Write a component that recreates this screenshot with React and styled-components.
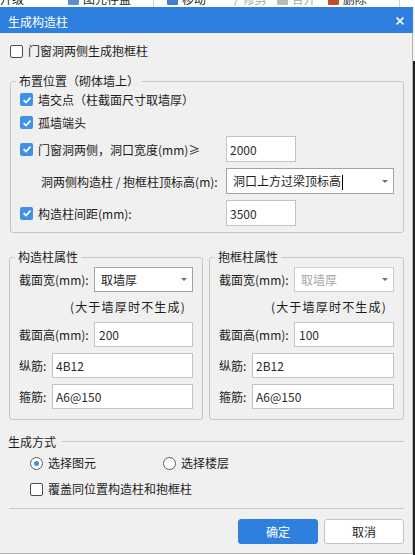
import React from 'react';
import styled, { createGlobalStyle } from 'styled-components';

const GlobalStyle = createGlobalStyle`
  html, body {
    margin: 0;
    padding: 0;
    background: #ffffff;
  }
  body {
    font-family: "Noto Sans CJK SC", "Microsoft YaHei", "Noto Sans", sans-serif;
    font-size: 12px;
    color: #1c1c1c;
  }
  * {
    box-sizing: border-box;
  }
`;

const BLUE = '#2f80de';

const Page = styled.div`
  width: 415px;
  height: 555px;
  overflow: hidden;
  display: flex;
  flex-direction: column;
  background: #ffffff;
`;

const BehindBar = styled.div`
  height: 7px;
  flex: none;
  display: flex;
  align-items: flex-end;
  overflow: hidden;
  background: #ffffff;
`;

const ToolItem = styled.span`
  flex: none;
  display: inline-flex;
  align-items: center;
  gap: 4px;
  height: 16px;
  line-height: 16px;
  margin-left: ${(p) => p.$gap || 0}px;
  color: ${(p) => (p.$muted ? '#a8a8a8' : '#1c1c1c')};
  white-space: nowrap;
`;

const ToolDivider = styled.span`
  flex: none;
  width: 1px;
  height: 16px;
  background: #cfcfcf;
  margin-left: ${(p) => p.$gap || 0}px;
`;

const ToolIcon = styled.span`
  width: 11px;
  height: 12px;
  background: ${(p) => p.$color};
  border-radius: 1px;
`;

const Main = styled.div`
  flex: 1;
  display: flex;
`;

const Side = styled.div`
  flex: 1;
  background: linear-gradient(#f4f4f4 0, #f4f4f4 54px, #1e1e1e 54px);
`;

const Dialog = styled.div`
  width: 413px;
  height: 547px;
  flex: none;
  display: flex;
  flex-direction: column;
  background: #f0f0f0;
  border-right: 1px solid #b4b4b4;
  border-bottom: 1px solid #a9bcd6;
`;

const TitleBar = styled.div`
  height: 26px;
  flex: none;
  display: flex;
  align-items: center;
  justify-content: space-between;
  padding: 2px 9px 0 8px;
  margin-right: -1px;
  background: ${BLUE};
  color: #ffffff;
  font-size: 12px;
`;

const Body = styled.div`
  flex: 1;
  display: flex;
  flex-direction: column;
  padding: 0 8px 0 9px;
`;

const Line = styled.div`
  display: flex;
  align-items: center;
  height: ${(p) => p.$h || 16}px;
  margin-top: ${(p) => p.$mt || 0}px;
  padding-left: ${(p) => p.$pl || 0}px;
  line-height: 16px;
  white-space: nowrap;
`;

const Box = styled.span`
  flex: none;
  width: 13px;
  height: 13px;
  margin-right: 5px;
  border-radius: 2px;
  display: inline-flex;
  align-items: center;
  justify-content: center;
  background: ${(p) => (p.$checked ? '#3f90e8' : '#ffffff')};
  border: ${(p) => (p.$checked ? 'none' : '1px solid #4d4d4d')};
`;

const Round = styled.span`
  flex: none;
  width: 13px;
  height: 13px;
  margin-right: 5px;
  border-radius: 50%;
  border: 1px solid #5a5a5a;
  background: #ffffff;
  display: inline-flex;
  align-items: center;
  justify-content: center;

  &::after {
    content: '';
    width: 5px;
    height: 5px;
    border-radius: 50%;
    background: ${(p) => (p.$checked ? '#3f90e8' : 'transparent')};
  }
`;

const RadioItem = styled.span`
  display: inline-flex;
  align-items: center;
  width: ${(p) => p.$w || 'auto'};
`;

const Group = styled.fieldset`
  margin: ${(p) => p.$mt || 0}px 0 0 ${(p) => p.$ml || 0}px;
  padding: ${(p) => p.$pt || 0}px 9px ${(p) => p.$pb || 0}px 9px;
  min-width: 0;
  flex: ${(p) => p.$flex || 'none'};
  border: 1px solid #c6c6c6;
  border-radius: 3px;
  display: flex;
  flex-direction: column;

  legend {
    padding: 0 3px;
    margin-left: -4px;
    line-height: 14px;
    font-size: 12px;
  }
`;

const GroupRow = styled.div`
  display: flex;
  gap: 6px;
  margin-top: 17px;
`;

const FieldRow = styled.div`
  display: flex;
  align-items: center;
  height: ${(p) => p.$h || 25}px;
  margin-top: ${(p) => p.$mt || 0}px;
  white-space: nowrap;
`;

const Label = styled.span`
  flex: none;
  display: inline-flex;
  align-items: center;
  width: ${(p) => p.$w}px;
  padding-left: ${(p) => p.$pl || 0}px;
`;

const TextInput = styled.input`
  height: 100%;
  width: ${(p) => (p.$w ? `${p.$w}px` : 'auto')};
  flex: ${(p) => (p.$w ? 'none' : 1)};
  min-width: 0;
  margin: 0;
  padding: 0 ${(p) => p.$pad || 3}px;
  border: 1px solid #c3c3c3;
  border-radius: 0;
  background: #ffffff;
  font: inherit;
  color: #2a2a2a;
  outline: none;
`;

const Select = styled.div`
  flex: 1;
  height: 100%;
  display: flex;
  align-items: center;
  justify-content: space-between;
  padding: 0 5px 0 6px;
  background: #ffffff;
  border: 1px solid ${(p) => (p.$disabled ? '#cdcdcd' : '#a3a3a3')};
  color: ${(p) => (p.$disabled ? '#a6a6a6' : '#1c1c1c')};
`;

const Caret = styled.span`
  width: 0;
  height: 0;
  border-left: 3px solid transparent;
  border-right: 3px solid transparent;
  border-top: 3px solid #6e6e6e;
`;

const TextCursor = styled.span`
  display: inline-block;
  width: 1px;
  height: 15px;
  margin-left: 1px;
  vertical-align: middle;
  background: #000000;
`;

const Note = styled.div`
  height: 18px;
  margin-top: 6px;
  padding-right: 7px;
  text-align: right;
  line-height: 18px;
  letter-spacing: 1.2px;
  white-space: nowrap;
`;

const SectionHead = styled.div`
  display: flex;
  align-items: center;
  height: 16px;
  margin-top: 13px;
  margin-left: -1px;

  &::after {
    content: '';
    flex: 1;
    height: 1px;
    margin-left: 6px;
    background: #c8c8c8;
  }
`;

const Separator = styled.div`
  height: 1px;
  margin-top: 11px;
  background: #c8c8c8;
`;

const Buttons = styled.div`
  display: flex;
  justify-content: flex-end;
  gap: 6px;
  margin-top: 10px;
`;

const Button = styled.button`
  width: 80px;
  height: 25px;
  margin: 0;
  padding: 0;
  border-radius: 3px;
  font: inherit;
  cursor: pointer;
  background: ${(p) => (p.$primary ? BLUE : '#ffffff')};
  color: ${(p) => (p.$primary ? '#ffffff' : '#1c1c1c')};
  border: 1px solid ${(p) => (p.$primary ? BLUE : '#c4c4c4')};
`;

const Check = ({ checked }) => (
  <Box $checked={checked}>
    {checked && (
      <svg width="10" height="10" viewBox="0 0 10 10">
        <path d="M1.6 5.2 L4 7.5 L8.5 2.6" fill="none" stroke="#ffffff" strokeWidth="1.7" />
      </svg>
    )}
  </Box>
);

const CloseIcon = () => (
  <svg width="8" height="8" viewBox="0 0 8 8">
    <path d="M0.6 0.6 L7.4 7.4 M7.4 0.6 L0.6 7.4" stroke="#ffffff" strokeWidth="1.6" />
  </svg>
);

const PropGroup = ({ title, width, disabled, height, bars, stirrup, flex, ml }) => (
  <Group $pt={3} $pb={10} $flex={flex} $ml={ml}>
    <legend>{title}</legend>
    <FieldRow>
      <Label $w={75}>截面宽(mm):</Label>
      <Select $disabled={disabled}>
        <span>{width}</span>
        <Caret />
      </Select>
    </FieldRow>
    <Note>(大于墙厚时不生成)</Note>
    <FieldRow $mt={6}>
      <Label $w={75}>截面高(mm):</Label>
      <TextInput defaultValue={height} $pad={4} />
    </FieldRow>
    <FieldRow $mt={6}>
      <Label $w={33}>纵筋:</Label>
      <TextInput defaultValue={bars} />
    </FieldRow>
    <FieldRow $mt={6}>
      <Label $w={33}>箍筋:</Label>
      <TextInput defaultValue={stirrup} />
    </FieldRow>
  </Group>
);

const App = () => {
  return (
    <Page>
      <GlobalStyle />
      <BehindBar>
        <ToolItem>升级</ToolItem>
        <ToolItem $gap={44}>
          <ToolIcon $color="#5b8fd0" />
          <span>图元存盘</span>
        </ToolItem>
        <ToolDivider $gap={22} />
        <ToolItem $gap={13}>
          <ToolIcon $color="#3d7fd6" />
          <span>移动</span>
        </ToolItem>
        <ToolItem $gap={28} $muted>
          <span>/</span>
          <span>修剪</span>
        </ToolItem>
        <ToolItem $gap={10} $muted>
          <ToolIcon $color="#b9b9b9" />
          <span>合并</span>
        </ToolItem>
        <ToolItem $gap={12}>
          <ToolIcon $color="#c0502c" />
          <span>删除</span>
        </ToolItem>
        <ToolDivider $gap={32} />
      </BehindBar>

      <Main>
        <Dialog>
          <TitleBar>
            <span>生成构造柱</span>
            <CloseIcon />
          </TitleBar>

          <Body>
            <Line $mt={10} $pl={1}>
              <Check />
              门窗洞两侧生成抱框柱
            </Line>

            <Group $mt={15} $ml={1} $pb={6}>
              <legend>布置位置（砌体墙上）</legend>
              <Line $h={23}>
                <Check checked />
                墙交点（柱截面尺寸取墙厚）
              </Line>
              <Line $h={23}>
                <Check checked />
                孤墙端头
              </Line>
              <FieldRow $h={26} $mt={2}>
                <Label $w={206}>
                  <Check checked />
                  门窗洞两侧，洞口宽度(mm)≥
                </Label>
                <TextInput defaultValue="2000" $w={70} />
              </FieldRow>
              <FieldRow $h={26} $mt={6}>
                <Label $w={206} $pl={21}>
                  洞两侧构造柱 / 抱框柱顶标高(m):
                </Label>
                <Select>
                  <span>
                    洞口上方过梁顶标高
                    <TextCursor />
                  </span>
                  <Caret />
                </Select>
              </FieldRow>
              <FieldRow $h={26} $mt={6}>
                <Label $w={206}>
                  <Check checked />
                  构造柱间距(mm):
                </Label>
                <TextInput defaultValue="3500" $w={70} />
              </FieldRow>
            </Group>

            <GroupRow>
              <PropGroup
                title="构造柱属性"
                width="取墙厚"
                height="200"
                bars="4B12"
                stirrup="A6@150"
                flex="0 0 194px"
              />
              <PropGroup
                title="抱框柱属性"
                width="取墙厚"
                disabled
                height="100"
                bars="2B12"
                stirrup="A6@150"
                flex="1"
              />
            </GroupRow>

            <SectionHead>生成方式</SectionHead>
            <Line $mt={6} $pl={21}>
              <RadioItem $w="133px">
                <Round $checked />
                选择图元
              </RadioItem>
              <RadioItem>
                <Round />
                选择楼层
              </RadioItem>
            </Line>
            <Line $mt={10} $pl={21}>
              <Check />
              覆盖同位置构造柱和抱框柱
            </Line>

            <Separator />
            <Buttons>
              <Button $primary>确定</Button>
              <Button>取消</Button>
            </Buttons>
          </Body>
        </Dialog>
        <Side />
      </Main>
    </Page>
  );
};

export default App;
